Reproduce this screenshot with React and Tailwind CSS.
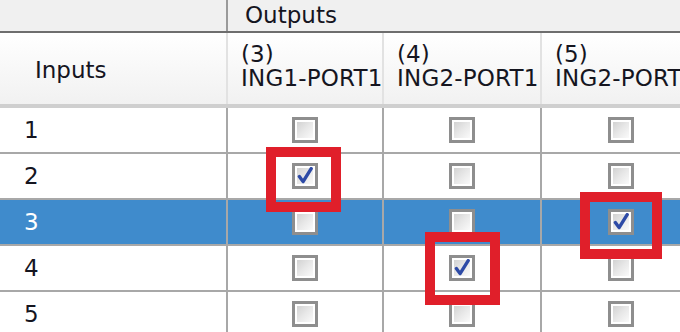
const cols = [
  { id: 3, name: "ING1-PORT1" },
  { id: 4, name: "ING2-PORT1" },
  { id: 5, name: "ING2-PORT1" },
];

const widths = ["w-[228px]", "w-[156px]", "w-[158px]", "w-[160px]"];

const checked = { "2-0": "a", "4-1": "b", "3-2": "c" };

function Box({ on }) {
  return (
    <div className="w-[26px] h-[26px] border-[3px] border-[#8e8e8e] bg-white p-[2px]">
      <div className="w-full h-full bg-gradient-to-br from-[#d2d2d2] via-[#e8e8e8] to-[#fafafa] flex items-center justify-center">
        {on && (
          <svg width="18" height="18" viewBox="0 0 16 16" className="shrink-0">
            <path d="M3 8.5 L6.3 13 L13.5 1.5" fill="none" stroke="#2d4aa6" strokeWidth="3" strokeLinecap="round" strokeLinejoin="round" />
          </svg>
        )}
      </div>
    </div>
  );
}

function Mark({ kind }) {
  if (kind === "a") return <div className="absolute left-[-26px] top-[-16px] w-[75px] h-[65px] border-[10px] border-[#e01f2a] z-10" />;
  if (kind === "b") return <div className="absolute left-[-24px] top-[-23px] w-[75px] h-[73px] border-[10px] border-[#e01f2a] z-10" />;
  return <div className="absolute left-[-28px] top-[-17px] w-[82px] h-[67px] border-[10px] border-[#e01f2a] z-10" />;
}

export default function App() {
  const rows = [1, 2, 3, 4, 5];
  return (
    <div className="w-[680px] h-[332px] overflow-hidden bg-white text-[23px] text-[#15151f]" style={{ fontFamily: '"DejaVu Sans", Verdana, sans-serif' }}>
      <div className="flex h-[33px] bg-[#f0f0f0] border-b-2 border-[#6e6e6e]">
        <div className="w-[228px] shrink-0 border-r-2 border-[#9a9a9a]" />
        <div className="pl-[17px] leading-[30px] whitespace-nowrap">Outputs</div>
      </div>
      <div className="flex h-[75px] bg-gradient-to-b from-white to-[#f1f1f1] border-b-[4px] border-[#cfcfcf]">
        <div className="w-[228px] shrink-0 border-r-2 border-[#e2e2e2] flex items-center pl-[35px] pt-[3px]">Inputs</div>
        {cols.map((c, i) => (
          <div key={c.id} className={`${widths[i + 1]} shrink-0 border-r-2 border-[#e2e2e2] pl-[13px] pt-[9px] leading-[24px] overflow-hidden whitespace-nowrap`}>
            <div>({c.id})</div>
            <div className="tracking-[0.2px]">{c.name}</div>
          </div>
        ))}
      </div>
      {rows.map((r) => (
        <div key={r} className={`flex h-[46px] border-b-2 border-[#a8a8a8] ${r === 3 ? "bg-[#3f8bcc] text-white" : ""}`}>
          <div className="w-[228px] shrink-0 border-r-2 border-[#a8a8a8] flex items-center pl-[24px]">{r}</div>
          {cols.map((c, i) => (
            <div key={c.id} className={`${widths[i + 1]} shrink-0 border-r-2 border-[#a8a8a8] flex items-center justify-center`}>
              <div className="relative">
                <Box on={!!checked[`${r}-${i}`]} />
                {checked[`${r}-${i}`] && <Mark kind={checked[`${r}-${i}`]} />}
              </div>
            </div>
          ))}
        </div>
      ))}
    </div>
  );
}
